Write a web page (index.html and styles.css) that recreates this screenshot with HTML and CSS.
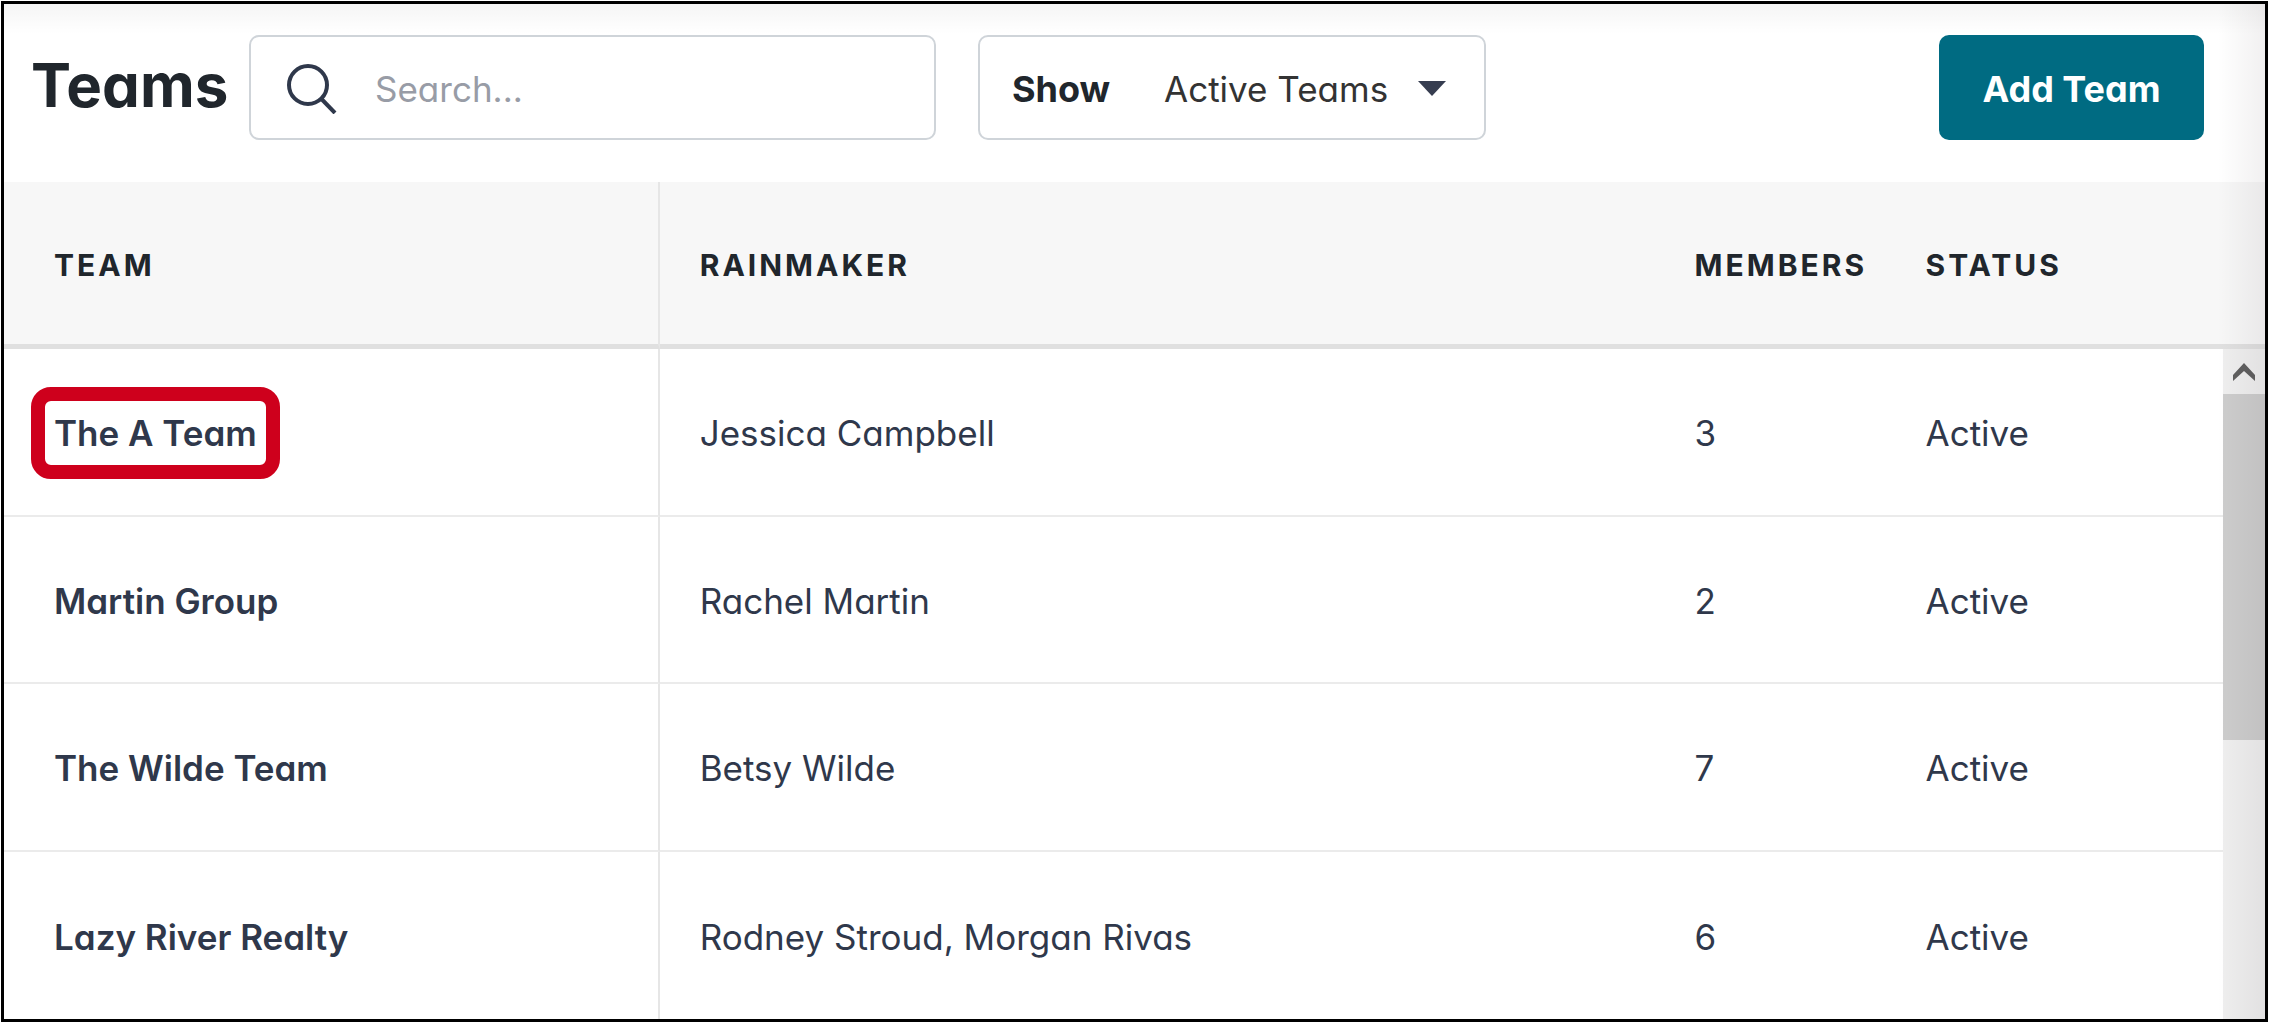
FILE: index.html
```
<!DOCTYPE html>
<html lang="en">
<head>
    <meta charset="UTF-8">
    <meta name="viewport" content="width=device-width, initial-scale=1.0">
    <title>Teams</title>
    <link rel="stylesheet" href="styles.css">
</head>
<body>
    <main class="panel">
        <header class="toolbar">
            <h1>Teams</h1>
            <label class="field search">
                <svg class="search-icon" viewBox="0 0 50 50" aria-hidden="true">
                    <circle cx="21" cy="21" r="19"/>
                    <path d="M34.500 35L48 49"/>
                </svg>
                <input type="search" placeholder="Search..." aria-label="Search teams">
            </label>
            <div class="field filter">
                <label for="show">Show</label>
                <select id="show">
                    <option>Active Teams</option>
                    <option>Inactive Teams</option>
                    <option>All Teams</option>
                </select>
                <svg class="caret" viewBox="0 0 28 15" aria-hidden="true"><path d="M0 0h28L14 15z"/></svg>
            </div>
            <button type="button" class="add-btn">Add Team</button>
        </header>

        <div class="list">
            <table class="teams">
                <colgroup>
                    <col class="col-team">
                    <col class="col-rainmaker">
                    <col class="col-members">
                    <col>
                </colgroup>
                <thead>
                    <tr>
                        <th>Team</th>
                        <th>Rainmaker</th>
                        <th>Members</th>
                        <th>Status</th>
                    </tr>
                </thead>
                <tbody>
                    <tr>
                        <td><a href="#" class="highlight">The A Team</a></td>
                        <td>Jessica Campbell</td>
                        <td>3</td>
                        <td>Active</td>
                    </tr>
                    <tr>
                        <td><a href="#">Martin Group</a></td>
                        <td>Rachel Martin</td>
                        <td>2</td>
                        <td>Active</td>
                    </tr>
                    <tr>
                        <td><a href="#">The Wilde Team</a></td>
                        <td>Betsy Wilde</td>
                        <td>7</td>
                        <td>Active</td>
                    </tr>
                    <tr>
                        <td><a href="#">Lazy River Realty</a></td>
                        <td>Rodney Stroud, Morgan Rivas</td>
                        <td>6</td>
                        <td>Active</td>
                    </tr>
                </tbody>
            </table>

            <div class="scrollbar">
                <button type="button" class="scroll-up" aria-label="Scroll up">
                    <svg viewBox="0 0 22 18" aria-hidden="true"><path d="M0 12L11 0l11 12v6L11 8 0 18z"/></svg>
                </button>
                <div class="thumb"></div>
            </div>
        </div>
    </main>
</body>
</html>
```

FILE: styles.css
```
* {
    box-sizing: border-box;
}

body {
    margin: 0;
    padding: 1px;
    background: #fff;
    color: #2f384b;
    font-family: Inter, "Open Sans", sans-serif;
    font-feature-settings: "cv11";
    font-size: 35px;
}

.panel {
    position: relative;
    display: flex;
    flex-direction: column;
    min-height: calc(100vh - 2px);
    border: 3px solid #000;
    overflow: hidden;
}

/* soft shading along the top and right edges */
.panel::before,
.panel::after {
    content: "";
    position: absolute;
    top: 0;
    right: 0;
    pointer-events: none;
}

.panel::before {
    left: 0;
    height: 30px;
    background: linear-gradient(rgba(0, 0, 0, 0.04), transparent);
}

.panel::after {
    bottom: 0;
    width: 48px;
    background: linear-gradient(to left, rgba(20, 0, 10, 0.06), transparent);
}

.toolbar {
    display: flex;
    align-items: center;
    height: 178px;
    padding: 0 61px 11px 27px;
}

h1 {
    flex: 0 0 218px;
    margin: 0;
    padding-bottom: 6px;
    color: #20262c;
    font-size: 60px;
    line-height: 80px;
}

.field {
    display: flex;
    align-items: center;
    min-width: 0;
    height: 105px;
    padding: 2px 38px 0 36px;
    border: 2px solid #cfd4d9;
    border-radius: 10px;
    background: #fff;
}

.search {
    flex: 0 1 687px;
}

.search-icon {
    flex: none;
    width: 50px;
    height: 50px;
    fill: none;
    stroke: #2f384b;
    stroke-width: 4;
}

.search input {
    flex: 1;
    min-width: 0;
    padding: 0;
    margin-left: 38px;
    border: 0;
    outline: 0;
    background: none;
    font: inherit;
}

.search input::placeholder {
    color: #989ca6;
}

.filter {
    flex: 0 1 508px;
    margin-left: 42px;
    padding-left: 32px;
    color: #20262c;
}

.filter label {
    flex: 0 0 152px;
    font-size: 36px;
    font-weight: 700;
}

.filter select {
    flex: 1;
    min-width: 0;
    padding: 0;
    border: 0;
    background: none;
    color: #333;
    font: inherit;
    appearance: none;
}

.caret {
    flex: none;
    width: 28px;
    height: 15px;
    fill: #363d50;
}

.add-btn {
    width: 265px;
    height: 105px;
    padding: 2px 0 0;
    margin-left: auto;
    border: 0;
    border-radius: 10px;
    background: #006b82;
    color: #fff;
    font: inherit;
    font-size: 36px;
    font-weight: 700;
    cursor: pointer;
}

.list {
    display: grid;
    flex: 1;
}

.teams {
    grid-area: 1 / 1;
    width: 100%;
    height: 100%;
    table-layout: fixed;
    border-collapse: separate;
    border-spacing: 0;
    white-space: nowrap;
}

.col-team {
    width: 29%;
}

.col-rainmaker {
    width: 44%;
}

.col-members {
    width: 231px;
}

.teams th,
.teams td {
    height: 167px;
    padding: 3px 0 0 40px;
    text-align: left;
}

.teams th {
    border-bottom: 5px solid #e0e0e0;
    background: #f7f7f7;
    color: #20262c;
    font-size: 30px;
    letter-spacing: 3px;
    text-transform: uppercase;
}

.teams td {
    border-bottom: 2px solid #ebebeb;
}

.teams tbody tr:last-child td {
    border-bottom: 0;
}

.teams th:first-child,
.teams td:first-child {
    padding-left: 50px;
    border-right: 2px solid #e6e6e6;
}

.teams a {
    color: inherit;
    font-weight: 600;
    text-decoration: none;
}

.highlight {
    display: inline-block;
    margin-left: -23px;
    padding: 11px 9px;
    border: 14px solid #ce001c;
    border-radius: 20px;
}

.scrollbar {
    grid-area: 1 / 1;
    justify-self: end;
    width: 42px;
    margin-top: 167px;
    background: #efefef;
}

.scroll-up {
    display: flex;
    align-items: center;
    justify-content: center;
    width: 100%;
    height: 45px;
    padding: 0;
    border: 0;
    background: none;
}

.scroll-up svg {
    width: 22px;
    height: 18px;
    fill: #606060;
}

.thumb {
    height: 346px;
    background: #cdcdcd;
}
```
